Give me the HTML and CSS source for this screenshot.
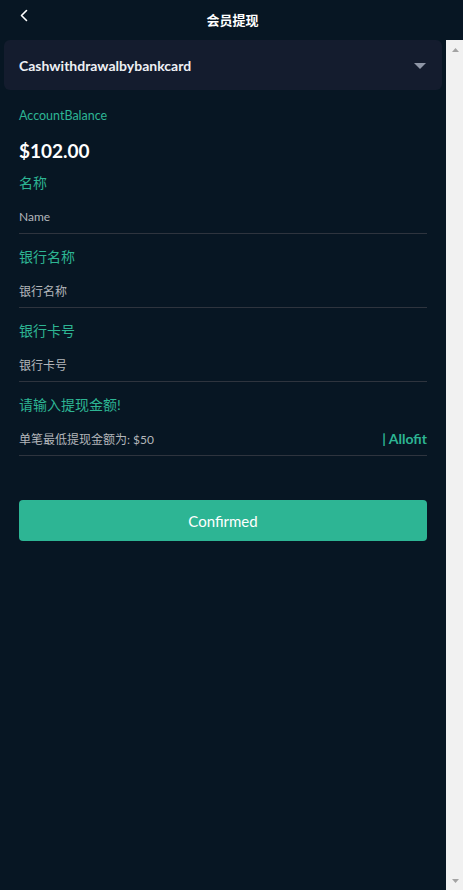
FILE: index.html
```html
<!DOCTYPE html>
<html lang="zh">
<head>
<meta charset="utf-8">
<title>会员提现</title>
<link rel="stylesheet" href="styles.css">
</head>
<body>
<header class="topbar">
  <span class="back">
    <svg width="10" height="13" viewBox="0 0 10 13"><path d="M7.5 1.5 L2.5 6.5 L7.5 11.5" fill="none" stroke="#ffffff" stroke-width="1.6" stroke-linecap="round" stroke-linejoin="round"/></svg>
  </span>
  <h1 class="title">会员提现</h1>
</header>
<div class="viewport">
  <main class="content">
    <div class="select">
      <span class="select-text">Cashwithdrawalbybankcard</span>
      <span class="caret"></span>
    </div>
    <section class="form">
      <div class="label small">AccountBalance</div>
      <div class="balance">$102.00</div>
      <div class="label">名称</div>
      <div class="field"><span class="placeholder">Name</span></div>
      <div class="label">银行名称</div>
      <div class="field"><span class="placeholder">银行名称</span></div>
      <div class="label">银行卡号</div>
      <div class="field"><span class="placeholder">银行卡号</span></div>
      <div class="label">请输入提现金额!</div>
      <div class="field"><span class="placeholder">单笔最低提现金额为: $50</span><span class="all">| Allofit</span></div>
      <button class="confirm">Confirmed</button>
    </section>
  </main>
  <div class="scrollbar">
    <svg class="arrow" width="7" height="4" viewBox="0 0 7 4"><path d="M0 4 L3.5 0 L7 4 Z" fill="#a3a3a3"/></svg>
    <svg class="arrow" width="7" height="4" viewBox="0 0 7 4"><path d="M0 0 L7 0 L3.5 4 Z" fill="#a3a3a3"/></svg>
  </div>
</div>
</body>
</html>
```
FILE: styles.css
```css
html, body {
  margin: 0;
  padding: 0;
  height: 100%;
  overflow: hidden;
  background: #071623;
  font-family: "Lato", "Noto Sans CJK SC", sans-serif;
  color: #ffffff;
}
body {
  display: flex;
  flex-direction: column;
}
.topbar {
  height: 40px;
  flex: 0 0 40px;
  position: relative;
  display: flex;
  align-items: center;
  justify-content: center;
  background: #071623;
}
.back {
  position: absolute;
  left: 19px;
  top: 9px;
  display: flex;
}
.title {
  margin: 0;
  font-size: 13px;
  font-weight: 700;
  line-height: 40px;
  padding-left: 2px;
}
.viewport {
  flex: 1;
  display: flex;
  min-height: 0;
}
.content {
  flex: 1;
  min-width: 0;
  padding: 0 4px;
}
.scrollbar {
  flex: 0 0 17px;
  background: #f1f1f1;
  display: flex;
  flex-direction: column;
  justify-content: space-between;
  align-items: center;
  padding: 8px 0 7px;
  box-sizing: border-box;
}
.arrow {
  display: block;
  margin-left: 1px;
}
.select {
  height: 50px;
  background: #141c2e;
  border-radius: 6px;
  display: flex;
  align-items: center;
  justify-content: space-between;
  padding: 0 16px 0 15px;
}
.select-text {
  font-size: 14px;
  font-weight: 700;
  color: #eef0f4;
}
.caret {
  width: 0;
  height: 0;
  border-left: 6.5px solid transparent;
  border-right: 6.5px solid transparent;
  border-top: 6px solid #8f96a6;
  margin-top: 2px;
}
.form {
  padding: 16px 15px 0;
  display: flex;
  flex-direction: column;
}
.label {
  color: #2db593;
  font-size: 14px;
  line-height: 20px;
}
.label.small {
  font-size: 12.5px;
}
.balance {
  font-size: 19px;
  font-weight: 700;
  line-height: 24px;
  margin: 13px 0 10px;
}
.field {
  height: 41px;
  padding-top: 6px;
  border-bottom: 1px solid #2e343e;
  display: flex;
  align-items: center;
  justify-content: space-between;
  margin-bottom: 13px;
  box-sizing: border-box;
}
.placeholder {
  font-size: 12px;
  color: #b3b6bb;
}
.all {
  font-size: 14px;
  font-weight: 700;
  color: #2db593;
}
.confirm {
  margin-top: 31px;
  height: 41px;
  border: 0;
  border-radius: 4px;
  background: #2db594;
  color: #ffffff;
  font-family: inherit;
  font-size: 15px;
}
```
